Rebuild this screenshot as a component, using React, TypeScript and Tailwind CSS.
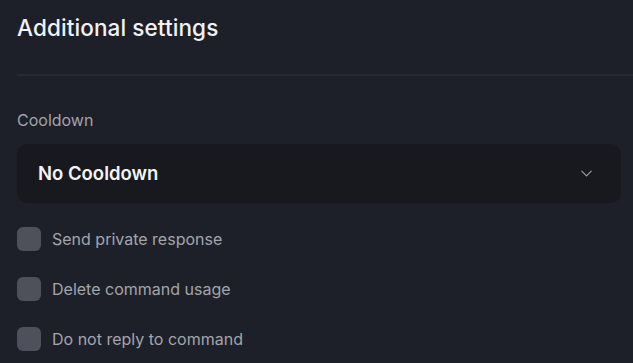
import { ChevronDown } from "lucide-react";

const options = [
  "Send private response",
  "Delete command usage",
  "Do not reply to command",
];

export default function App() {
  return (
    <div className="min-h-[363px] w-[633px] overflow-hidden bg-[#1e2029] font-['Inter',sans-serif]">
      {/* Header */}
      <div className="pl-[17px] pt-[13px]">
        <h2 className="text-[22.5px] font-medium leading-[30px] tracking-[0.1px] text-[#f1f2f4]">
          Additional settings
        </h2>
        <div className="mt-[31px] h-[2px] w-[640px] bg-[#282a33]" />
      </div>

      {/* Cooldown */}
      <div className="pl-[17px] pt-[34px]">
        <p className="text-[16px] leading-[20px] text-[#a2a4ab]">Cooldown</p>
        <button className="mt-[14px] flex h-[59px] w-[604px] items-center justify-between rounded-[10px] bg-[#18191e] pl-[21px] pr-[25px]">
          <span className="text-[18.5px] font-semibold text-[#f4f4f6]">No Cooldown</span>
          <ChevronDown size={19} strokeWidth={1.4} className="text-[#9ea0a7]" />
        </button>
      </div>

      {/* Checkboxes */}
      <div className="flex flex-col gap-[26px] pl-[17px] pt-[24px]">
        {options.map((label) => (
          <label key={label} className="flex items-center gap-[11px]">
            <span className="h-[24px] w-[24px] rounded-[6px] bg-[#4e515b]" />
            <span className="text-[16px] leading-[24px] text-[#a3a5ac]">{label}</span>
          </label>
        ))}
      </div>
    </div>
  );
}
